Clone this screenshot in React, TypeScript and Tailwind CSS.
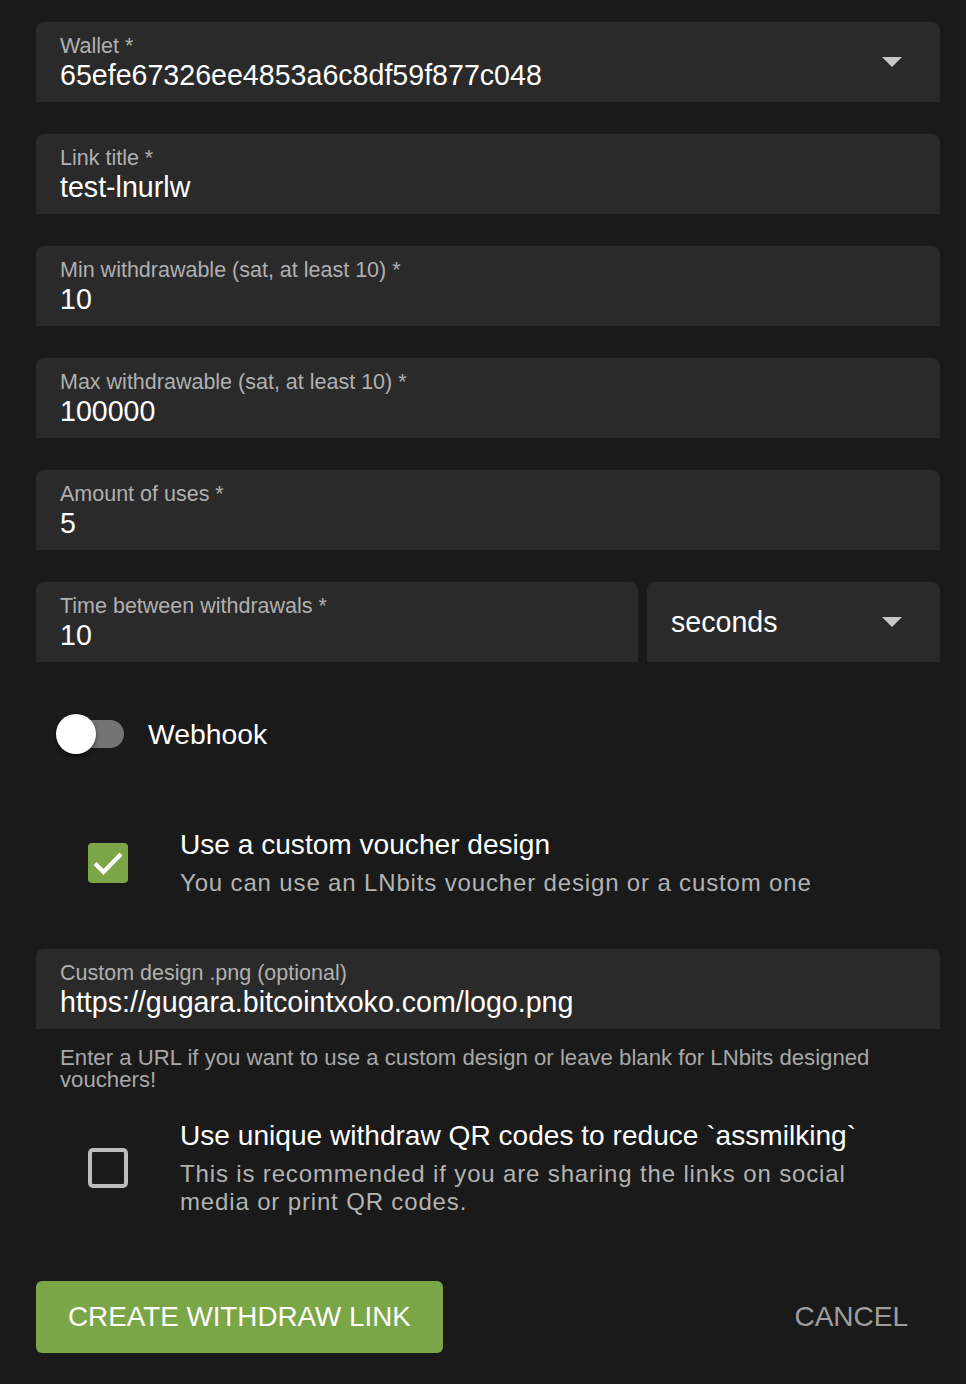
import { useState } from "react";

const font = { fontFamily: '"Liberation Sans", Arial, Helvetica, sans-serif' };

function Caret() {
  return (
    <svg width="20" height="10" viewBox="0 0 20 10" className="shrink-0">
      <path d="M0 0h20L10 10z" fill="#c8c8c8" />
    </svg>
  );
}

function Field({ label, value, className = "" }: { label: string; value: string; className?: string }) {
  return (
    <div className={`h-[80px] rounded-t-lg bg-[#2a2a2a] px-6 pt-3 ${className}`}>
      <div className="text-[21.5px] leading-[25px] text-[#b0b0b0]">{label}</div>
      <div className="text-[28.6px] leading-[32px] text-white">{value}</div>
    </div>
  );
}

function SelectField({ label, value }: { label: string; value: string }) {
  return (
    <div className="flex h-[80px] items-center rounded-t-lg bg-[#2a2a2a] pl-6 pr-[38px]">
      <div className="flex-1">
        <div className="text-[21.5px] leading-[25px] text-[#b0b0b0]">{label}</div>
        <div className="text-[28.6px] leading-[32px] text-white">{value}</div>
      </div>
      <Caret />
    </div>
  );
}

function CheckItem({
  checked,
  title,
  caption,
  onToggle,
}: {
  checked: boolean;
  title: string;
  caption: string;
  onToggle: () => void;
}) {
  return (
    <div className="flex items-center pl-[52px] pr-10" onClick={onToggle}>
      {checked ? (
        <div className="grid h-10 w-10 shrink-0 place-items-center rounded-[4px] bg-[#7ba647]">
          <svg width="32" height="26" viewBox="0 0 32 26">
            <path d="M3 13.5l8.5 8.5L29 4" fill="none" stroke="#fff" strokeWidth="4.2" />
          </svg>
        </div>
      ) : (
        <div className="h-10 w-10 shrink-0 rounded-[5px] border-[4px] border-[#bdbdbd]" />
      )}
      <div className="ml-[52px] min-w-0">
        <div className="text-[28.1px] leading-[32px] text-white">{title}</div>
        <div className="mt-[8px] text-[24px] leading-[28px] tracking-[0.85px] text-[#b3b3b3]">{caption}</div>
      </div>
    </div>
  );
}

export default function App() {
  const [webhook, setWebhook] = useState(false);
  const [custom, setCustom] = useState(true);
  const [unique, setUnique] = useState(false);

  return (
    <div className="min-h-[1384px] bg-[#1a1a1a] pl-9 pr-[26px] pt-[22px] pb-[31px]" style={font}>
      <div className="flex flex-col gap-8">
        <SelectField label="Wallet *" value="65efe67326ee4853a6c8df59f877c048" />
        <Field label="Link title *" value="test-lnurlw" />
        <Field label="Min withdrawable (sat, at least 10) *" value="10" />
        <Field label="Max withdrawable (sat, at least 10) *" value="100000" />
        <Field label="Amount of uses *" value="5" />
        <div className="flex gap-[9px]">
          <Field label="Time between withdrawals *" value="10" className="flex-1" />
          <div className="flex h-[80px] w-[293px] items-center rounded-t-lg bg-[#2a2a2a] pl-6 pr-[38px]">
            <div className="flex-1 text-[28.6px] leading-[32px] text-white">seconds</div>
            <Caret />
          </div>
        </div>
      </div>

      <div className="mt-[52px] flex items-center pl-5" onClick={() => setWebhook(!webhook)}>
        <div className="relative h-10 w-[68px]">
          <div className="absolute left-[6px] right-0 top-[6px] h-[28px] rounded-full bg-[#737373]" />
          <div className="absolute left-0 top-0 h-10 w-10 rounded-full bg-white shadow-[0_2px_4px_rgba(0,0,0,0.45)]" />
        </div>
        <div className="ml-6 text-[28.3px] leading-[32px] text-white">Webhook</div>
      </div>

      <div className="mt-[75px]">
        <CheckItem
          checked={custom}
          onToggle={() => setCustom(!custom)}
          title="Use a custom voucher design"
          caption="You can use an LNbits voucher design or a custom one"
        />
      </div>

      <Field
        className="mt-[52px]"
        label="Custom design .png (optional)"
        value="https://gugara.bitcointxoko.com/logo.png"
      />
      <div className="mt-[18px] px-6 text-[22.2px] leading-[22px] text-[#a8a8a8]">
        Enter a URL if you want to use a custom design or leave blank for LNbits designed vouchers!
      </div>

      <div className="mt-[29px]">
        <CheckItem
          checked={unique}
          onToggle={() => setUnique(!unique)}
          title="Use unique withdraw QR codes to reduce `assmilking`"
          caption="This is recommended if you are sharing the links on social media or print QR codes."
        />
      </div>

      <div className="mt-[65px] flex items-center justify-between">
        <button className="h-[72px] rounded-md bg-[#7ba647] px-8 text-[27.8px] font-medium text-white">
          CREATE WITHDRAW LINK
        </button>
        <button className="h-[72px] px-8 text-[28px] font-medium text-[#9e9e9e]">CANCEL</button>
      </div>
    </div>
  );
}
